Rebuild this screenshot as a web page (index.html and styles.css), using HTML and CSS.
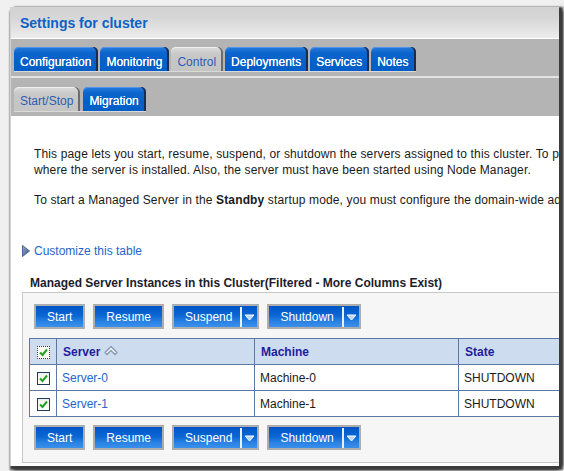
FILE: index.html
```html
<!DOCTYPE html>
<html>
<head>
<meta charset="utf-8">
<link rel="stylesheet" href="styles.css">
</head>
<body>
<div class="shot">
  <div class="header"><h1>Settings for cluster</h1></div>
  <div class="tabbar main">
    <div class="tabs">
      <span class="tab">Configuration</span>
      <span class="tab">Monitoring</span>
      <span class="tab sel">Control</span>
      <span class="tab">Deployments</span>
      <span class="tab">Services</span>
      <span class="tab">Notes</span>
    </div>
  </div>
  <div class="tabbar sub">
    <div class="tabs">
      <span class="tab sel">Start/Stop</span>
      <span class="tab">Migration</span>
    </div>
  </div>
  <div class="content">
    <div class="intro">
      <p>This page lets you start, resume, suspend, or shutdown the servers assigned to this cluster. To perform these operations, Node Manager must be running on the machine<br>where the server is installed. Also, the server must have been started using Node Manager.</p>
      <p>To start a Managed Server in the <b>Standby</b> startup mode, you must configure the domain-wide administration port.</p>
    </div>
    <div class="customize">
      <svg width="8" height="12" viewBox="0 0 8 12"><defs><linearGradient id="tg" x1="0" y1="0" x2="1" y2="1"><stop offset="0" stop-color="#9fb2d2"/><stop offset="1" stop-color="#2b4a86"/></linearGradient></defs><polygon points="0.5,0.5 7.5,6 0.5,11.5" fill="url(#tg)" stroke="#4a6290" stroke-width="1"/></svg>
      <a class="link">Customize this table</a>
    </div>
    <div class="region">
      <h2>Managed Server Instances in this Cluster(Filtered - More Columns Exist)</h2>
      <div class="panel">
        <div class="btnrow">
          <span class="btn">Start</span>
          <span class="btn">Resume</span>
          <span class="btn split"><span class="lbl">Suspend</span><span class="drop"><svg width="11" height="7" viewBox="0 0 11 7"><polygon points="1,1 10,1 5.5,6" fill="#b9d6f4" stroke="#ffffff" stroke-width="1"/></svg></span></span>
          <span class="btn split"><span class="lbl">Shutdown</span><span class="drop"><svg width="11" height="7" viewBox="0 0 11 7"><polygon points="1,1 10,1 5.5,6" fill="#b9d6f4" stroke="#ffffff" stroke-width="1"/></svg></span></span>
        </div>
        <table class="grid">
          <colgroup><col class="c1"><col class="c2"><col class="c3"><col class="c4"></colgroup>
          <tr>
            <th class="cb"><span class="chk focus"><svg width="11" height="11" viewBox="0 0 11 11"><path d="M2 5.5 L4.5 8 L9 2.5" fill="none" stroke="#22a022" stroke-width="2"/></svg></span></th>
            <th><span class="sort">Server <svg width="14" height="11" viewBox="0 0 14 11"><polygon points="1,7.5 7,1.5 13,7.5 11,9.5 7,5.5 3,9.5" fill="#eef2f8" stroke="#8494ac" stroke-width="1.2" stroke-linejoin="round"/></svg></span></th>
            <th>Machine</th>
            <th>State</th>
          </tr>
          <tr>
            <td class="cb"><span class="chk"><svg width="11" height="11" viewBox="0 0 11 11"><path d="M2 5.5 L4.5 8 L9 2.5" fill="none" stroke="#22a022" stroke-width="2"/></svg></span></td>
            <td><a class="link">Server-0</a></td>
            <td>Machine-0</td>
            <td>SHUTDOWN</td>
          </tr>
          <tr>
            <td class="cb"><span class="chk"><svg width="11" height="11" viewBox="0 0 11 11"><path d="M2 5.5 L4.5 8 L9 2.5" fill="none" stroke="#22a022" stroke-width="2"/></svg></span></td>
            <td><a class="link">Server-1</a></td>
            <td>Machine-1</td>
            <td>SHUTDOWN</td>
          </tr>
        </table>
        <div class="btnrow bottom">
          <span class="btn">Start</span>
          <span class="btn">Resume</span>
          <span class="btn split"><span class="lbl">Suspend</span><span class="drop"><svg width="11" height="7" viewBox="0 0 11 7"><polygon points="1,1 10,1 5.5,6" fill="#b9d6f4" stroke="#ffffff" stroke-width="1"/></svg></span></span>
          <span class="btn split"><span class="lbl">Shutdown</span><span class="drop"><svg width="11" height="7" viewBox="0 0 11 7"><polygon points="1,1 10,1 5.5,6" fill="#b9d6f4" stroke="#ffffff" stroke-width="1"/></svg></span></span>
        </div>
      </div>
    </div>
  </div>
</div>
</body>
</html>
```
FILE: styles.css
```css
* { box-sizing: border-box; }
html, body { margin: 0; padding: 0; }
body {
  background: #f0f0f0;
  width: 564px;
  height: 471px;
  overflow: hidden;
  font-family: "Liberation Sans", Arial, sans-serif;
  font-size: 12px;
  color: #1a1a1a;
}
.shot {
  margin: 7px 0 0 10px;
  width: 549px;
  height: 459px;
  border-left: 1px solid #d2d2d2;
  border-top: 1px solid #d2d2d2;
  background: #fff;
  overflow: hidden;
  box-shadow: 4px 0 2px #3c3c3c, 0 4px 2px #3c3c3c, 4px 4px 2px #3c3c3c;
}
.header {
  height: 31px;
  border-bottom: 1px solid #fff;
  background: linear-gradient(#d2d2d2, #d6d6d6 30%, #e2e2e2 70%, #ededed);
  padding-left: 9px;
}
.header h1 {
  margin: 0;
  font-size: 14px;
  line-height: 30px;
  font-weight: bold;
  color: #0d62c6;
}
.tabbar { background: #b4b4b4; }
.tabbar.main { height: 39px; padding-top: 8px; border-bottom: 2px solid #e2e2e2; }
.tabbar.sub { height: 38px; padding-top: 9px; }
.tabs {
  display: flex;
  gap: 2px;
  width: max-content;
  margin-left: 3px;
  border-bottom: 1px solid #dadada;
}
.sub .tabs { gap: 3px; }
.tab {
  height: 24px;
  padding: 7px 7px 0 6px;
  line-height: 16px;
  color: #fff;
  border-radius: 5px 5px 0 0;
  background: linear-gradient(#2a7ce0, #0a64cc 25%, #005ec6);
  box-shadow: inset -2px 0 0 #1c2c4c, inset 0 1px 0 #4f94e6;
  white-space: nowrap;
  text-shadow: 0 0 0.4px #fff;
}
.sub .tab { padding-top: 6px; }
.tab.sel {
  color: #2b5db6;
  background: linear-gradient(#dcdcdc, #c8c8c8 30%, #c4c4c4);
  box-shadow: inset -2px 0 0 #6c6c6c, inset 0 1px 0 #eeeeee;
  text-shadow: none;
}
.content { padding-top: 30px; }
.intro { padding-left: 23px; white-space: nowrap; letter-spacing: 0.14px; }
.intro p { margin: 0; line-height: 16px; }
.intro p + p { margin-top: 14px; }
.customize {
  margin-top: 35px;
  padding-left: 11px;
  display: flex;
  align-items: center;
  gap: 4px;
  height: 16px;
}
.link { color: #2565cc; text-decoration: none; }
.region { margin-top: 16px; margin-left: 11px; }
.region h2 {
  margin: 0 0 1px;
  padding-left: 8px;
  font-size: 12px;
  line-height: 16px;
  font-weight: bold;
  color: #1c1c2c;
  white-space: nowrap;
}
.panel {
  width: 640px;
  border: 1px solid #c8c8c8;
  border-right: none;
  background: #f6f6f6;
  padding: 11px 0 12px 6px;
}
.btnrow { display: flex; gap: 8px; margin-left: 5px; height: 25px; }
.btnrow.bottom { margin-top: 8px; }
.btn {
  display: inline-flex;
  align-items: center;
  height: 25px;
  padding: 1px 11px 0;
  border: 2px solid #adadad;
  background: linear-gradient(#0055c6, #0b66d4 45%, #2a82e4 75%, #3a90ea);
  color: #fff;
  white-space: nowrap;
}
.btn.split { padding-right: 0; }
.btn .lbl { padding-right: 8px; }
.btn .drop {
  align-self: stretch;
  display: flex;
  align-items: center;
  justify-content: center;
  width: 17px;
  border-left: 2px solid #e8f0fa;
}
.grid {
  margin-top: 9px;
  border-collapse: collapse;
  table-layout: fixed;
  width: 580px;
  border: 1px solid #5a7aa2;
}
.grid col.c1 { width: 27px; }
.grid col.c2 { width: 198px; }
.grid col.c3 { width: 204px; }
.grid col.c4 { width: 151px; }
.grid th, .grid td {
  border: 1px solid #5a7aa2;
  height: 26px;
  padding: 0 5px;
  text-align: left;
  white-space: nowrap;
  vertical-align: middle;
}
.grid th {
  background: #cedcef;
  color: #1e1e9c;
  font-weight: bold;
  padding-left: 6px;
}
.grid td { background: #fff; }
.grid .cb { padding: 0; text-align: center; }
.chk {
  display: inline-flex;
  align-items: center;
  justify-content: center;
  width: 13px;
  height: 13px;
  border: 1px solid #1e3a5c;
  background: linear-gradient(#f0f0f0, #ffffff);
  vertical-align: middle;
}
.chk.focus { border: 1px dotted #3a3a3a; background: #fdfdf6; }
.sort { display: inline-flex; align-items: center; gap: 4px; }
.sort svg { margin-top: -2px; }
```
